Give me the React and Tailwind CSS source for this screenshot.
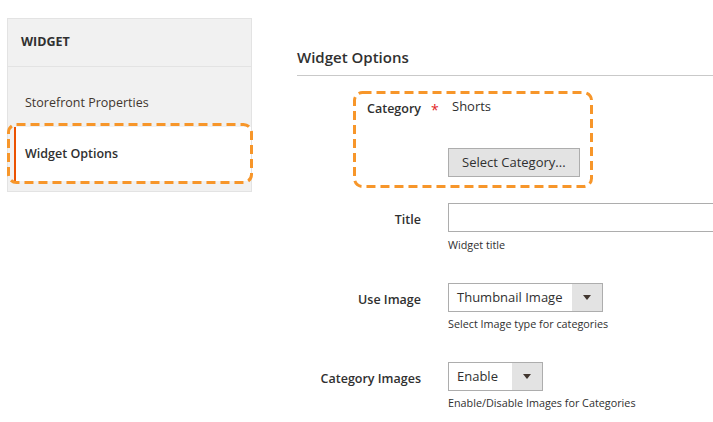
import React from 'react';

const Arrow = () => (
  <svg width="8" height="5" viewBox="0 0 8 5" className="fill-[#41362f]">
    <path d="M0 0h8L4 5z" />
  </svg>
);

// orange dashed annotation frame laid over the content
const Dashed = ({ className }) => (
  <svg className={`absolute pointer-events-none ${className}`} width="100%" height="100%">
    <rect
      x="1.5"
      y="1.5"
      width="calc(100% - 3px)"
      height="calc(100% - 3px)"
      rx="8"
      fill="none"
      stroke="#f7962a"
      strokeWidth="3"
      strokeDasharray="9 5"
    />
  </svg>
);

const Select = ({ value, width }) => (
  <div className={`flex h-[29px] border border-[#adadad] bg-white ${width}`}>
    <span className="flex-1 flex items-center pl-[8px] text-[13px] text-[#303030]">{value}</span>
    <span className="w-[30px] bg-[#e3e3e3] flex items-center justify-center">
      <Arrow />
    </span>
  </div>
);

const Row = ({ label, className, children, required, labelTop = 'pt-[2px]' }) => (
  <div className={`flex ${className}`}>
    <div className={`w-[124px] flex justify-end items-start shrink-0 ${labelTop}`}>
      <span className="text-[12.5px] font-semibold text-[#303030] leading-[29px]">{label}</span>
    </div>
    <div className="w-[27px] shrink-0 relative">
      {required && (
        <span className="absolute left-[10px] -top-[3px] text-[14px] text-[#e22626] leading-[29px]">*</span>
      )}
    </div>
    <div className="flex-1 min-w-0">{children}</div>
  </div>
);

export default function App() {
  return (
    <div className="w-[713px] h-[422px] overflow-hidden bg-white flex font-['Open_Sans',sans-serif]">
      {/* Sidebar */}
      <aside className="ml-[7px] mt-[18px] w-[245px] self-start relative">
        <div className="border border-[#e3e3e3] bg-[#f1f1f1]">
          <div className="h-[48px] px-[13px] flex items-center border-b border-[#e3e3e3] text-[12.5px] font-bold text-[#303030]">
            WIDGET
          </div>
          <div className="h-[60px] pl-[17px] pt-[27px] text-[12.5px] text-[#41362f]">Storefront Properties</div>
          <div className="ml-[6px] h-[54px] border-l-2 border-[#eb5202] bg-white flex items-center pl-[9px] text-[12.5px] font-semibold text-[#303030]">
            Widget Options
          </div>
          <div className="h-[10px]" />
        </div>
        <div className="absolute left-0 top-[105px] w-[246px] h-[61px]">
          <Dashed className="inset-0" />
        </div>
      </aside>

      {/* Main */}
      <main className="ml-[45px] flex-1 min-w-0 pt-[47px]">
        <h2 className="text-[15px] font-semibold text-[#303030] leading-[20px] pb-[8px] border-b border-[#c9c9c9]">
          Widget Options
        </h2>

        <div className="relative mt-[22px]">
          <Row label="Category" required labelTop="-mt-[4px]">
            <div className="text-[13px] text-[#303030] leading-[20px] pl-[4px] -mt-[2px]">Shorts</div>
            <button className="mt-[32px] h-[29px] px-[13px] bg-[#e3e3e3] border border-[#adadad] text-[13px] text-[#303030]">
              Select Category...
            </button>
          </Row>
          <div className="absolute left-[56px] top-[-7px] w-[240px] h-[97px]">
            <Dashed className="inset-0" />
          </div>
        </div>

        <Row label="Title" className="mt-[26px]">
          <div className="h-[29px] border border-[#adadad] bg-white w-[300px]" />
          <p className="mt-[5px] text-[10.8px] text-[#303030] leading-[16px]">Widget title</p>
        </Row>

        <Row label="Use Image" className="mt-[30px]">
          <Select value="Thumbnail Image" width="w-[155px]" />
          <p className="mt-[4px] text-[10.8px] text-[#303030] leading-[16px]">Select Image type for categories</p>
        </Row>

        <Row label="Category Images" className="mt-[30px]">
          <Select value="Enable" width="w-[95px]" />
          <p className="mt-[4px] text-[10.8px] text-[#303030] leading-[16px]">Enable/Disable Images for Categories</p>
        </Row>
      </main>
    </div>
  );
}
